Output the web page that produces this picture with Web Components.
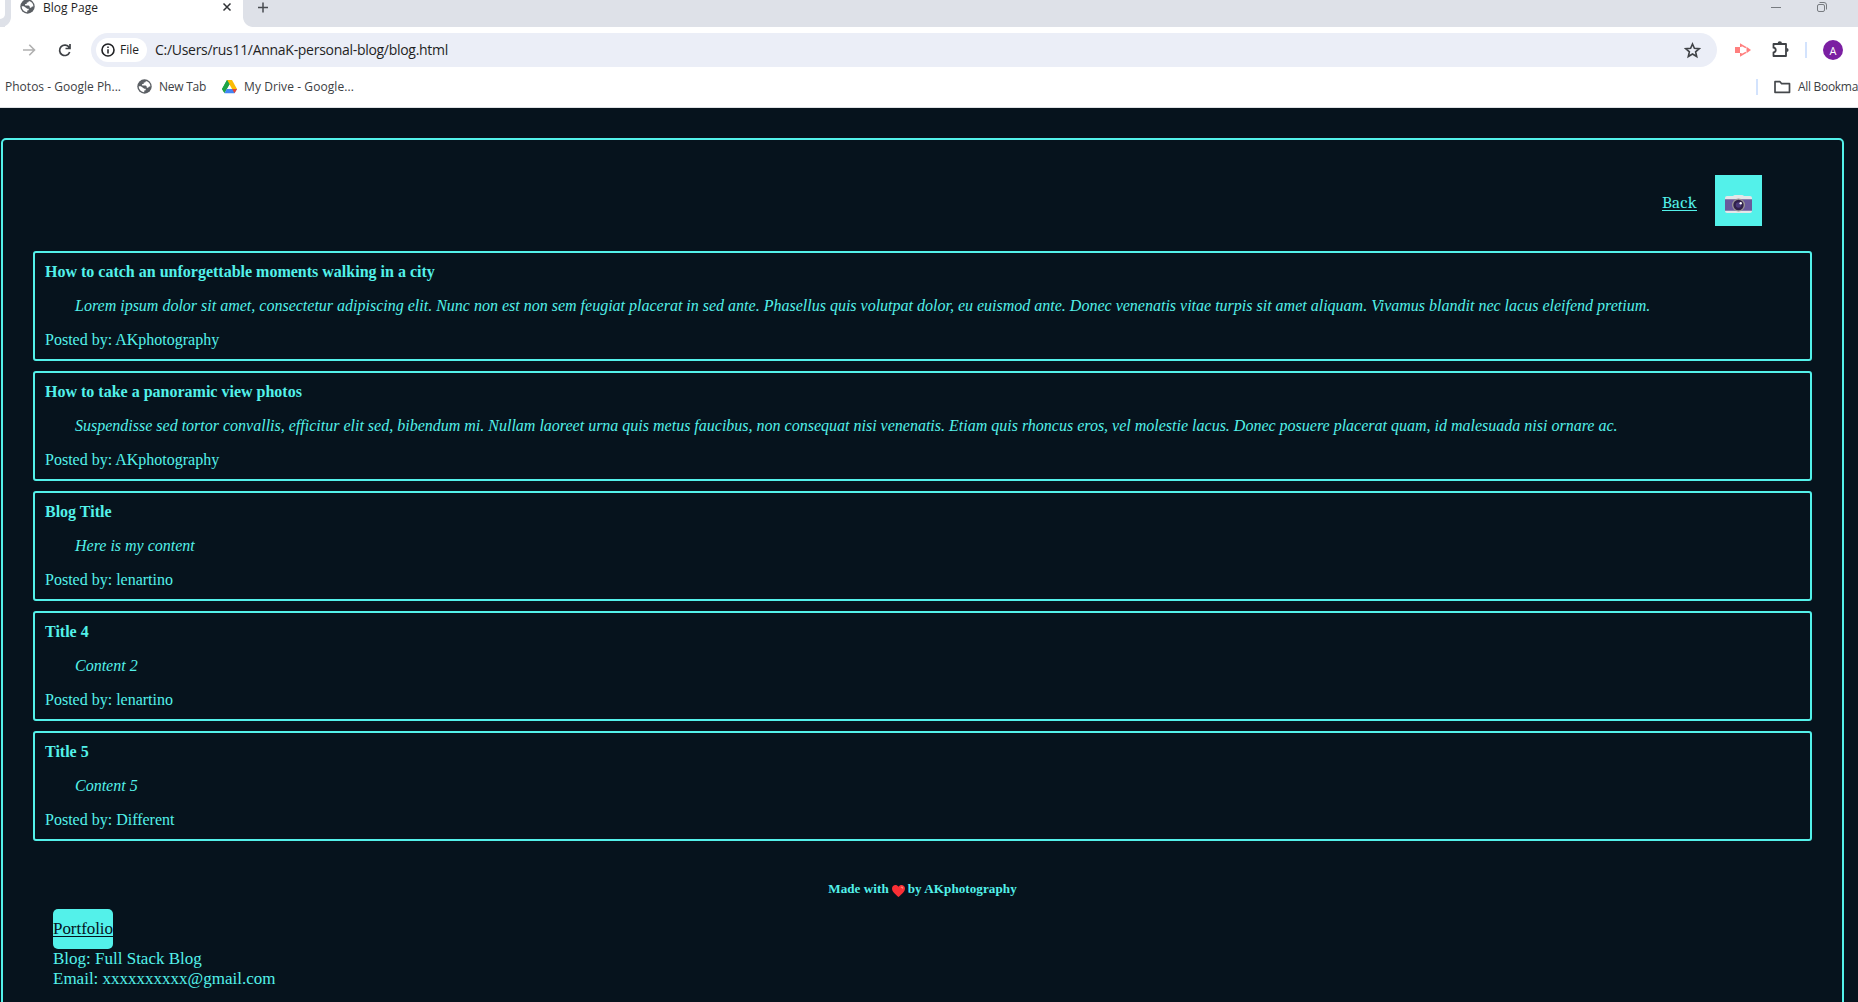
<!DOCTYPE html>
<html lang="en">
<head>
<meta charset="utf-8">
<title>Blog Page</title>
<style>
html,body{margin:0;height:100%;overflow:hidden;background:#06131d}
body{font-family:"Liberation Serif","Times New Roman",serif}
</style>
</head>
<body>
<blog-window></blog-window>
<script>
const define=(name,html,after)=>customElements.define(name,class extends HTMLElement{
  constructor(){super();this.attachShadow({mode:'open'}).innerHTML=html}
  connectedCallback(){if(after)after.call(this)}
});

/* Text spread by letter-spacing to the width given in the "w" attribute. */
define('fit-text','<style>:host{display:inline-block;white-space:pre}span{display:inline-block;white-space:pre}:host([link]) span{text-decoration:underline;text-decoration-thickness:1px;text-underline-offset:2px}</style><span><slot></slot></span>',function(){
  const s=this.shadowRoot.querySelector('span'),n=this.textContent.length,w=+this.getAttribute('w');
  const now=s.getBoundingClientRect().width;
  if(now&&w)s.style.letterSpacing=((w-now)/n).toFixed(4)+'px';
});

define('globe-icon',`<style>:host{display:block;width:15px;height:15px}svg{display:block}</style>
<svg width="15" height="15" viewBox="0 0 15 15"><circle cx="7.5" cy="7.5" r="7.2" fill="#5b5f64"/>
<path d="M8.800 1.900c0 1.200-.8 1.700-2 1.600l-.2 1.400-1.500.2v1.500h3.300c1.100.2 1.400.9 1.400 2.200h1.400c.2-1 .9-1.400 2.200-1.300.1-2.600-1.500-4.900-4.600-5.600zM1.700 7.300c0 3 2.200 5.500 5.500 5.900l.1-1.800 1.400-.2V9.700H7.300L3.900 7.300z" fill="#fff"/></svg>`);

define('tab-strip',`<style>
:host{display:flex;height:27px;background:#dee1e8;font:12px "Open Sans","Noto Sans",sans-serif;color:#1f1f1f}
.prev{width:5px;height:19px;background:#fff;border-radius:0 0 5px 0}
.c{width:10px;height:10px;align-self:flex-end}
.c.l{width:6px;background:radial-gradient(circle at -4px 0,#dee1e8 9.500px,#fff 10.300px)}
.c.r{background:radial-gradient(circle at 100% 0,#dee1e8 9.500px,#fff 10.300px)}
.tab{display:flex;width:232px;box-sizing:border-box;height:27px;background:#fff;padding:0 11px 0 9px}
globe-icon{margin-top:-1px}
fit-text{margin-left:8px;line-height:16px}
.x{margin:2px 0 0 auto}.plus{margin:2px 0 0 4px}
.win{display:flex;margin-left:auto;padding:2px 31px 0 0;gap:36px}
</style>
<div class="prev"></div><div class="c l"></div>
<div class="tab"><globe-icon></globe-icon><fit-text w="55">Blog Page</fit-text>
<svg class="x" width="10" height="10"><path d="M1.500 1.500l7 7m0-7l-7 7" stroke="#303236" stroke-width="1.500"/></svg></div>
<div class="c r"></div>
<svg class="plus" width="12" height="12"><path d="M6 .5v10M1 5.500h10" stroke="#484b50" stroke-width="1.500"/></svg>
<div class="win"><svg width="10" height="11"><path d="M0 5.500h10" stroke="#777b80"/></svg>
<svg width="10" height="11"><rect x=".5" y="2.500" width="7" height="7" rx="1.500" fill="none" stroke="#777b80"/><path d="M2.500 .5h4.500q2.500 0 2.500 2.500v4.500" fill="none" stroke="#777b80"/></svg></div>`);

define('address-bar',`<style>
:host{display:flex;align-items:center;height:46px;box-sizing:border-box;padding:0 14px 0 22px;color:#1f1f1f;font:12px "Open Sans","Noto Sans",sans-serif}
svg{display:block;flex:none}
.reload{margin-left:22px}
.omni{display:flex;align-items:center;margin-left:20px;width:1626px;height:34px;border-radius:17px;background:#ebeef7;box-sizing:border-box;padding:0 16px 0 5px}
.chip{display:flex;align-items:center;width:51px;height:24px;border-radius:12px;background:#fff;box-sizing:border-box;padding-left:5px;gap:5px}
.chip fit-text,.url{padding-bottom:1px}
.url{font-size:14px;margin-left:8px}
.star{margin-left:auto}
.cast{margin-left:18px}.ext{margin-left:21px;margin-top:-2px}
.sep{width:2px;height:16px;background:#d3e3fd;margin-left:16px}
.av{display:flex;align-items:center;justify-content:center;margin-left:16px;width:20px;height:20px;border-radius:50%;background:#7b1fa2;color:#fff;font-size:11px}
</style>
<svg width="14" height="14"><path d="M1 7h11M7.300 1.800L12.500 7l-5.200 5.200" fill="none" stroke="#b0b0b0" stroke-width="1.600"/></svg>
<svg class="reload" width="13" height="14"><path d="M11.200 4.500A5.200 5.200 0 1 0 11.700 9M12 1v4.500H7.500" fill="none" stroke="#3f4246" stroke-width="1.700"/></svg>
<div class="omni"><div class="chip"><svg width="14" height="14"><circle cx="7" cy="7" r="6" fill="none" stroke="#202124" stroke-width="1.600"/><path d="M7 6.200v4.200M7 3.500v1.600" stroke="#202124" stroke-width="1.500"/></svg><fit-text w="19">File</fit-text></div>
<fit-text class="url" w="293">C:/Users/rus11/AnnaK-personal-blog/blog.html</fit-text>
<svg class="star" width="17" height="17" viewBox="0 0 17 17"><path d="M8.500 2l1.900 4.300 4.800.4-3.600 3.100 1.100 4.700-4.200-2.500-4.200 2.500 1.100-4.700L1.800 6.700l4.800-.4z" fill="none" stroke="#404347" stroke-width="1.600"/></svg></div>
<svg class="cast" width="16" height="14"><path d="M0 4h5v6H0z" fill="#ff7f7e"/><path d="M5.800 4V1.700L11 4.600M5.800 10v2.300L11 9.400" fill="none" stroke="#ff7f7e" stroke-width="1.600"/><path d="M11.500 3.800L16 7l-4.500 3.200z" fill="#ff7f7e"/></svg>
<svg class="ext" width="17" height="18" viewBox="0 0 17 18"><path d="M1.500 4h12.500v12H1.500v-3.700c3-.2 3-4.400 0-4.600z" fill="none" stroke="#3f4246" stroke-width="1.800" stroke-linejoin="round"/><path d="M5.600 3.500a2.200 2.200 0 0 1 4.400 0M14.500 7.900a2.100 2.100 0 0 1 0 4.200" fill="#3f4246"/></svg>
<div class="sep"></div><div class="av">A</div>`);

define('bookmark-bar',`<style>
:host{display:flex;align-items:center;height:27px;padding-left:5px;color:#3c4043;font:12px "Open Sans","Noto Sans",sans-serif;overflow:hidden;white-space:nowrap;padding-bottom:7px;border-bottom:1px solid #dfe2e5}
svg{display:block;flex:none}fit-text{flex:none}
globe-icon{margin:0 7px 0 16px}.drive{margin:0 7px 0 16px}
.right{display:flex;align-items:center;width:102px;flex:none;margin-left:auto}
.sep{width:2px;height:16px;background:#d3e3fd;margin-right:16px;flex:none}
.right fit-text{margin-left:7px}
</style>
<fit-text w="116">Photos - Google Ph...</fit-text><globe-icon></globe-icon><fit-text w="47">New Tab</fit-text>
<svg class="drive" width="15" height="14" viewBox="0 0 15 14"><path d="M5 0h5L7.500 4.300 2.600 13 0 9z" fill="#34a853"/><path d="M5 0h5l5 9h-4.900z" fill="#fbbc04"/><path d="M5 0L0 9l2.300 4 5.200-8.800z" fill="#1ea446"/><path d="M4.800 9H15l-2.500 4.200H2.400z" fill="#4285f4"/><path d="M10.100 9H15l-2.500 4.200z" fill="#ea4335"/></svg>
<fit-text w="110">My Drive - Google...</fit-text>
<div class="right"><div class="sep"></div><svg width="17" height="14"><path d="M1 1.700h5l1.700 2H15.500v8.600H1z" fill="none" stroke="#45484c" stroke-width="1.700" stroke-linejoin="round"/></svg><fit-text w="60">All Bookma</fit-text></div>`);

define('browser-chrome',`<style>:host{display:block;height:108px;background:#fff;overflow:hidden}</style>
<tab-strip></tab-strip><address-bar></address-bar><bookmark-bar></bookmark-bar>`);

define('camera-button',`<style>:host{display:flex;width:47px;height:51px;background:#53f1ea;box-sizing:border-box;padding:20px 0 0 10px}</style>
<svg width="27" height="18" viewBox="0 0 27 18"><path d="M2 1h6q1-1 2-1h7q1 0 2 1h6q2 0 2 2v13q0 2-2 2H2q-2 0-2-2V3q0-2 2-2z" fill="#e4e6e8"/><path d="M0 4h27v12H0z" fill="#69599b"/><path d="M0 4h27v1H0zM0 15h27v1H0z" fill="#8a80ad"/><circle cx="13.500" cy="10" r="6.500" fill="#9b9696"/><circle cx="13.500" cy="10" r="5.200" fill="#30204a"/><circle cx="13.500" cy="10" r="2.800" fill="#493979"/><circle cx="15.700" cy="8.300" r="1.200" fill="#fff"/></svg>`);

define('blog-header',`<style>
:host{display:flex;justify-content:flex-end;align-items:center;height:51px;padding:35px 50px 25px 0}
a{color:inherit;font:17px/20px Cambria,"DejaVu Serif Condensed","DejaVu Serif",serif;margin-right:18px;padding-top:5px}
</style><a><fit-text link w="35">Back</fit-text></a><camera-button></camera-button>`);

define('blog-post',`<style>
:host{display:block;box-sizing:border-box;height:110px;border:2px solid #53f1ea;border-radius:3px;padding:10px;font-size:16px;line-height:18px;white-space:nowrap}
h2,p,blockquote{font-size:16px;margin:0 0 16px}
blockquote{font-style:italic;margin-left:30px}
</style><h2><slot name="title"></slot></h2><blockquote><slot></slot></blockquote><p>Posted by: <slot name="author"></slot></p>`);

define('blog-footer',`<style>
:host{display:block;padding-top:39px;font-size:17px;line-height:20px}
h5{display:flex;justify-content:center;align-items:center;margin:0 0 11px;font-size:13.100px;line-height:18px}
h5 svg{margin:3px 3px 0 3px}
section{padding-left:20px}
.p{display:flex;align-items:center;width:60px;height:40px;border-radius:5px;background:#53f1ea;color:#06131d}
</style>
<h5><fit-text w="60.5">Made with</fit-text><svg width="13" height="12" viewBox="0 0 13 12"><path d="M6.500 12C3 9 0 6.500 0 3.500 0 0 4.500-1.200 6.500 1.800 8.500-1.200 13 0 13 3.500 13 6.500 10 9 6.500 12z" fill="#f92f35"/><path d="M8.500 2.300q1.600-1.400 2.600 0v1.600z" fill="#ff8a77"/></svg><fit-text w="109">by AKphotography</fit-text></h5>
<section><a class="p"><fit-text link w="60">Portfolio</fit-text></a><div>Blog: Full Stack Blog</div><div>Email: xxxxxxxxxx@gmail.com</div></section>`);

define('blog-page',`<style>
:host{display:block;box-sizing:border-box;width:1843px;height:900px;margin:30px 0 0 1px;border:2px solid #53f1ea;border-radius:5px;padding:0 30px;color:#53f1ea}
main{display:flex;flex-direction:column;gap:10px}
</style><blog-header></blog-header><main>
<blog-post><span slot="title">How to catch an unforgettable moments walking in a city</span>Lorem ipsum dolor sit amet, consectetur adipiscing elit. Nunc non est non sem feugiat placerat in sed ante. Phasellus quis volutpat dolor, eu euismod ante. Donec venenatis vitae turpis sit amet aliquam. Vivamus blandit nec lacus eleifend pretium.<span slot="author">AKphotography</span></blog-post>
<blog-post><span slot="title">How to take a panoramic view photos</span>Suspendisse sed tortor convallis, efficitur elit sed, bibendum mi. Nullam laoreet urna quis metus faucibus, non consequat nisi venenatis. Etiam quis rhoncus eros, vel molestie lacus. Donec posuere placerat quam, id malesuada nisi ornare ac.<span slot="author">AKphotography</span></blog-post>
<blog-post><span slot="title">Blog Title</span>Here is my content<span slot="author">lenartino</span></blog-post>
<blog-post><span slot="title">Title 4</span>Content 2<span slot="author">lenartino</span></blog-post>
<blog-post><span slot="title">Title 5</span>Content 5<span slot="author">Different</span></blog-post>
</main><blog-footer></blog-footer>`);

define('blog-window',`<style>:host{display:flex;flex-direction:column;height:1002px;overflow:hidden;background:#06131d}browser-chrome,blog-page{flex:none}</style>
<browser-chrome></browser-chrome><blog-page></blog-page>`);
</script>
</body>
</html>
